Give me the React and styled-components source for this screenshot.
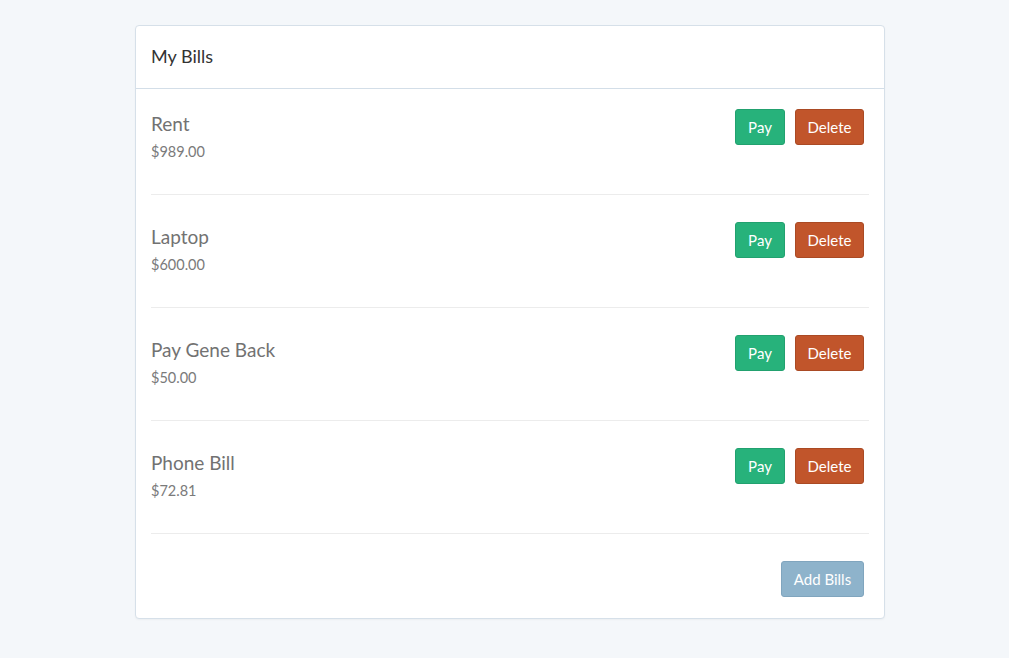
import React from 'react';
import styled, { createGlobalStyle } from 'styled-components';

const GlobalStyle = createGlobalStyle`
  body {
    margin: 0;
    background-color: #f4f7fa;
    font-family: 'Lato', 'Open Sans', sans-serif;
  }
`;

const Page = styled.div`
  min-height: 658px;
  padding: 25px 0 0 135px;
  box-sizing: border-box;
`;

const Card = styled.div`
  width: 750px;
  box-sizing: border-box;
  background-color: #fff;
  border: 1px solid #d6e0e9;
  border-radius: 4px;
  box-shadow: 0 1px 2px rgba(0, 0, 0, 0.04);
`;

const CardHeader = styled.div`
  height: 63px;
  display: flex;
  align-items: center;
  padding: 0 15px 2px 15px;
  box-sizing: border-box;
  border-bottom: 1px solid #d3dee8;
  font-size: 18px;
  color: #333;
`;

const CardBody = styled.div`
  padding: 0 15px 21px 15px;
`;

const BillRow = styled.div`
  display: flex;
  justify-content: space-between;
  align-items: flex-start;
  padding: 27px 5px 32px 0;
  border-bottom: 1px solid #ececec;
  &:first-child {
    padding-top: 20px;
  }
`;

const BillInfo = styled.div`
  display: flex;
  flex-direction: column;
`;

const BillName = styled.div`
  margin-top: 5px;
  font-size: 19px;
  line-height: 20px;
  color: #727272;
`;

const BillAmount = styled.div`
  margin-top: 8px;
  font-size: 14.5px;
  line-height: 20px;
  color: #7a7a7a;
`;

const Actions = styled.div`
  display: flex;
  gap: 10px;
`;

const variants = {
  pay: { bg: '#27b27b', border: '#22a16f' },
  danger: { bg: '#c1552b', border: '#aa4a24' },
  muted: { bg: '#8eb3cb', border: '#80a5be' },
};

const Button = styled.button`
  height: 36px;
  padding: 0;
  background-color: ${({ $variant }) => variants[$variant].bg};
  border: 1px solid ${({ $variant }) => variants[$variant].border};
  border-radius: 3px;
  color: #fff;
  font-family: inherit;
  font-size: 15px;
  cursor: pointer;
`;

const Footer = styled.div`
  display: flex;
  justify-content: flex-end;
  padding: 27px 5px 0 0;
`;

const bills = [
  { name: 'Rent', amount: '$989.00' },
  { name: 'Laptop', amount: '$600.00' },
  { name: 'Pay Gene Back', amount: '$50.00' },
  { name: 'Phone Bill', amount: '$72.81' },
];

const App = () => {
  return (
    <>
      <GlobalStyle />
      <Page>
        <Card>
          <CardHeader>My Bills</CardHeader>
          <CardBody>
            {bills.map((bill) => (
              <BillRow key={bill.name}>
                <BillInfo>
                  <BillName>{bill.name}</BillName>
                  <BillAmount>{bill.amount}</BillAmount>
                </BillInfo>
                <Actions>
                  <Button $variant="pay" style={{ width: 50 }}>Pay</Button>
                  <Button $variant="danger" style={{ width: 69 }}>Delete</Button>
                </Actions>
              </BillRow>
            ))}
            <Footer>
              <Button $variant="muted" style={{ width: 83 }}>Add Bills</Button>
            </Footer>
          </CardBody>
        </Card>
      </Page>
    </>
  );
};

export default App;
